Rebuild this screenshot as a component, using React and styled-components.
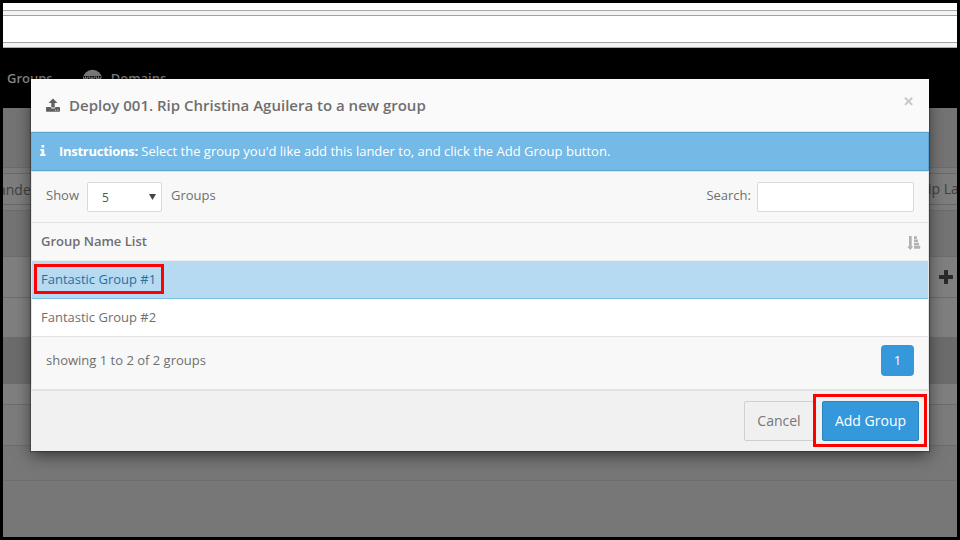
import React from 'react';
import styled, { createGlobalStyle } from 'styled-components';

const GlobalStyle = createGlobalStyle`
  * { box-sizing: border-box; }
  body { margin: 0; background: #000; font-family: "Open Sans", sans-serif; font-size: 13px; color: #6f6f6f; }
  button, input { font-family: inherit; }
`;

const Screen = styled.div`
  position: relative;
  width: 960px;
  height: 540px;
  border: 3px solid #000;
  overflow: hidden;
  background: #777;
`;

const Page = styled.div`
  display: flex;
  flex-direction: column;
  height: 534px;
`;

const Band = styled.div`
  flex: none;
  height: ${(p) => p.$h}px;
  background: ${(p) => p.$bg};
  border-bottom: ${(p) => (p.$line ? `1px solid ${p.$line}` : 'none')};
`;

const NavBar = styled.nav`
  flex: none;
  display: flex;
  height: 60px;
  padding: 21px 0 0 4px;
  background: #000;
  color: #848484;
  font-weight: 600;
  line-height: 18px;
`;

const NavItem = styled.span`
  display: flex;
  gap: 8px;
  margin-right: 30px;
`;

const CellBand = styled(Band)`
  display: flex;
  justify-content: space-between;
  align-items: center;
  padding-top: 1px;
  white-space: nowrap;
  color: #404040;
  font-size: 14px;
  line-height: 20px;
`;

const ClippedLeft = styled.span`
  margin-left: -5px;
`;

const ClippedRight = styled.span`
  width: 29px;
  padding-bottom: 2px;
`;

const PlusCell = styled(Band)`
  display: flex;
  justify-content: flex-end;
  align-items: center;
  padding-right: 4px;
`;

const Dialog = styled.section`
  position: absolute;
  left: 28px;
  top: 76px;
  display: flex;
  flex-direction: column;
  width: 898px;
  height: 372px;
  background: #f1f1f1;
  box-shadow: 0 0 1px 1px rgba(0, 0, 0, 0.25), 0 5px 15px rgba(0, 0, 0, 0.5);
`;

const Header = styled.header`
  display: flex;
  height: 53px;
  padding: 16px 15px 0 15px;
  background: #fafafa;
  border-bottom: 1px solid #e5e5e5;
`;

const Title = styled.h4`
  flex: 1;
  margin: 0 0 0 9px;
  font-size: 15px;
  font-weight: 600;
  line-height: 21px;
`;

const CloseButton = styled.button`
  align-self: flex-start;
  margin-top: 1px;
  padding: 0;
  border: 0;
  background: none;
  line-height: 0;
`;

const Alert = styled.div`
  display: flex;
  align-items: center;
  height: 39px;
  padding: 0 0 2px 8px;
  gap: 13px;
  color: #fff;
  background: #75b9e6;
  border: 1px solid #5ca5d5;
  border-left-color: #6db1df;
  line-height: 18px;
`;

const Strong = styled.strong`
  font-weight: 700;
  letter-spacing: -0.27px;
`;

const Panel = styled.div`
  height: 220px;
  border: 1px solid #e2e2e2;
  border-bottom-width: 2px;
  background: #f8f8f8;
`;

const Toolbar = styled.div`
  display: flex;
  height: 51px;
  padding: 10px 14px 10px;
  border-bottom: 1px solid #e2e2e2;
  line-height: 27px;
`;

const SelectBox = styled.div`
  display: flex;
  justify-content: space-between;
  align-items: center;
  width: 75px;
  height: 30px;
  margin: 0 9px 0 8px;
  padding: 0 5px 0 14px;
  border: 1px solid #d9d9d9;
  border-radius: 2px;
  background: #fff;
  color: #555;
  font-size: 12px;
`;

const SearchLabel = styled.label`
  display: flex;
  gap: 6px;
  margin-left: auto;
`;

const SearchInput = styled.input`
  width: 157px;
  height: 30px;
  border: 1px solid #d9d9d9;
  border-radius: 2px;
  background: #fff;
`;

const TableHead = styled.div`
  display: flex;
  justify-content: space-between;
  height: 38px;
  padding: 9px 7px 0 9px;
  border-bottom: 1px solid #eee;
  font-weight: 600;
  line-height: 18px;
`;

const SortMark = styled.span`
  padding-top: 4px;
  line-height: 0;
`;

const Row = styled.div`
  height: 38px;
  padding: 9px;
  line-height: 18px;
  background: ${(p) => (p.$selected ? '#b5daf2' : '#fff')};
  border-bottom: 1px solid ${(p) => (p.$selected ? '#7fbee6' : '#e2e2e2')};
  color: ${(p) => (p.$selected ? '#2a6f9f' : 'inherit')};
`;

const Pager = styled.div`
  display: flex;
  justify-content: space-between;
  padding: 8px 14px;
  line-height: 30px;
`;

const PageButton = styled.button`
  width: 33px;
  height: 31px;
  padding: 0 0 2px;
  border: 0;
  border-radius: 4px;
  background: #3598db;
  color: #fff;
  font-size: 13px;
`;

const Footer = styled.footer`
  display: flex;
  justify-content: flex-end;
  gap: 8px;
  padding: 10px 10px 0;
`;

const FooterButton = styled.button`
  width: ${(p) => (p.$primary ? 97 : 70)}px;
  height: 40px;
  padding: 0 0 1px;
  border: 1px solid ${(p) => (p.$primary ? '#2a83c1' : '#d0d0d0')};
  border-radius: 2px;
  background: ${(p) => (p.$primary ? '#3598db' : '#f0f0f0')};
  color: ${(p) => (p.$primary ? '#fff' : '#777')};
  font-size: 14px;
`;

const Highlight = styled.div`
  position: absolute;
  left: ${(p) => p.$x}px;
  top: ${(p) => p.$y}px;
  width: ${(p) => p.$w}px;
  height: ${(p) => p.$h}px;
  border: 3px solid #f00;
`;

const GlobeIcon = () => (
  <svg width="20" height="20" viewBox="0 0 20 20">
    <circle cx="9.500" cy="10.300" r="9.600" fill="#7c7c7c" />
    <rect y="7" width="20" height="7" fill="#000" />
    <path d="M0 7.500l1.200 4 1.300-3 1.300 3 1.400-4M6.500 7.500l1.200 4 1.300-3 1.300 3 1.400-4M13 7.500l1.200 4 1.300-3 1.300 3 1.400-4" fill="none" stroke="#909090" strokeWidth="1.300" />
  </svg>
);

const UploadIcon = () => (
  <svg width="14" height="21" viewBox="0 0 14 21" fill="#606060">
    <path d="M7 3.500L11.500 8H8.700v4.600H5.300V8H2.500z" />
    <path fillRule="evenodd" d="M.7 12h3.900c.2 1 .9 1.500 1.600 1.500h1.600c.7 0 1.400-.5 1.600-1.500h3.900c.4 0 .7.3.7.7V16c0 .4-.3.7-.7.7H.7A.7.7 0 0 1 0 16v-3.300c0-.4.3-.7.7-.7zM9 14.800v.7h1v-.7zm2.200 0v.7h1v-.7z" />
  </svg>
);

const CloseIcon = () => (
  <svg width="11" height="11" viewBox="0 0 11 11">
    <path d="M2 1.700l7.200 7.200M9.200 1.700L2 8.900" stroke="#c8c8c8" strokeWidth="2" />
  </svg>
);

const InfoIcon = () => (
  <svg width="6" height="11" viewBox="0 0 6 11" fill="#fff">
    <path d="M1.500 0h2.700v2.500H1.500zM.3 4h3.900v5h1.300v1.900H.2V9h1.300V5.800H.3z" />
  </svg>
);

const ArrowIcon = () => (
  <svg width="7" height="6" viewBox="0 0 7 6">
    <path d="M0 0h7L3.500 6z" fill="#444" />
  </svg>
);

const SortIcon = () => (
  <svg width="14" height="15" viewBox="0 0 14 15" fill="#b2b2b2">
    <path d="M2 0h2.700v10.500H6.300L3.300 14 .2 10.500H2zM7 .3h2.800v2.600H7zM7 3.500h4v2.600H7zM7 6.700h5v2.500H7zM7 9.800h6.200v3H7z" />
  </svg>
);

const PlusIcon = () => (
  <svg width="14" height="14" viewBox="0 0 14 14" fill="#292929">
    <path d="M5 .7C5 .3 5.300 0 5.700 0h2.600c.4 0 .7.3.7.7V5h4.300c.4 0 .7.3.7.7v2.600c0 .4-.3.7-.7.7H9v4.300c0 .4-.3.7-.7.7H5.700c-.4 0-.7-.3-.7-.7V9H.7C.3 9 0 8.700 0 8.300V5.700C0 5.300.3 5 .7 5H5z" />
  </svg>
);

export default function App() {
  return (
    <>
      <GlobalStyle />
      <Screen>
        <Page>
          <Band $h={8} $bg="#fff" $line="#aaa" />
          <Band $h={5} $bg="#f3f3f3" $line="#a2a2a2" />
          <Band $h={27} $bg="#fff" $line="#a2a2a2" />
          <Band $h={5} $bg="#f3f3f3" $line="#a9aeac" />
          <NavBar>
            <NavItem>Groups</NavItem>
            <NavItem><GlobeIcon />Domains</NavItem>
          </NavBar>
          <Band $h={60} $bg="#747474" $line="#6c6c6c" />
          <Band $h={6} $bg="#7c7c7c" $line="#6a6a6a" />
          <CellBand $h={31} $bg="#7d7d7d" $line="#686868">
            <ClippedLeft>ande</ClippedLeft>
            <ClippedRight>ip La</ClippedRight>
          </CellBand>
          <Band $h={6} $bg="#7c7c7c" $line="#6c6c6c" />
          <Band $h={46} $bg="#747474" $line="#6c6c6c" />
          <PlusCell $h={41} $bg="#7f7f7f" $line="#6c6c6c"><PlusIcon /></PlusCell>
          <Band $h={39} $bg="#7f7f7f" />
          <Band $h={47} $bg="#6c6c6c" />
          <Band $h={21} $bg="#7f7f7f" $line="#6c6c6c" />
          <Band $h={41} $bg="#7c7c7c" $line="#6c6c6c" />
          <Band $h={35} $bg="#777" $line="#6e6e6e" />
        </Page>

        <Dialog>
          <Header>
            <UploadIcon />
            <Title>Deploy 001. Rip Christina Aguilera to a new group</Title>
            <CloseButton aria-label="Close"><CloseIcon /></CloseButton>
          </Header>
          <Alert>
            <InfoIcon />
            <span><Strong>Instructions:</Strong> Select the group you'd like add this lander to, and click the Add Group button.</span>
          </Alert>
          <Panel>
            <Toolbar>
              <span>Show</span>
              <SelectBox>5<ArrowIcon /></SelectBox>
              <span>Groups</span>
              <SearchLabel>Search:<SearchInput /></SearchLabel>
            </Toolbar>
            <TableHead>Group Name List<SortMark><SortIcon /></SortMark></TableHead>
            <Row $selected>Fantastic Group #1</Row>
            <Row>Fantastic Group #2</Row>
            <Pager>
              <span>showing 1 to 2 of 2 groups</span>
              <PageButton>1</PageButton>
            </Pager>
          </Panel>
          <Footer>
            <FooterButton>Cancel</FooterButton>
            <FooterButton $primary>Add Group</FooterButton>
          </Footer>
        </Dialog>
        <Highlight $x={31} $y={261} $w={130} $h={30} />
        <Highlight $x={810} $y={391} $w={114} $h={53} />
      </Screen>
    </>
  );
}
